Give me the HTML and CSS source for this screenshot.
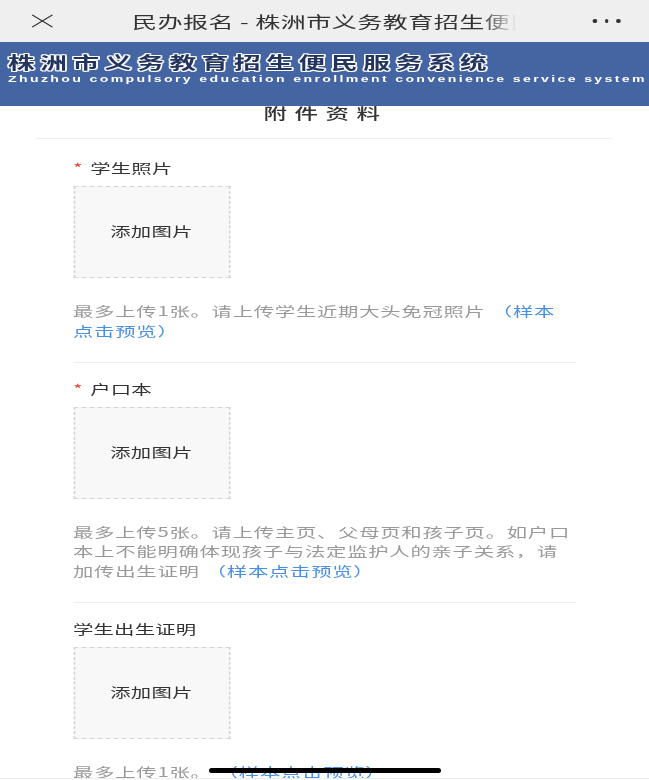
FILE: index.html
```html
<!DOCTYPE html>
<html lang="zh-CN">
<head>
<meta charset="utf-8">
<title>民办报名</title>
<link rel="stylesheet" href="styles.css">
</head>
<body>
<div class="page">
  <header class="topbar">
    <svg class="close" viewBox="0 0 14 14" width="14" height="14"><path d="M0.5 0.8 L13.5 13.2 M13.5 0.8 L0.5 13.2" stroke="#333" stroke-width="0.9" fill="none"/></svg>
    <div class="pagetitle">民办报名 - 株洲市义务教育招生便民服务系统</div>
    <div class="dots"><i></i><i></i><i></i></div>
  </header>
  <div class="banner">
    <div class="banner-cn">株洲市义务教育招生便民服务系统</div>
    <div class="banner-en">Zhuzhou compulsory education enrollment convenience service system</div>
  </div>
  <h1 class="heading">附件资料</h1>
  <main class="form">
    <section class="item">
      <div class="label"><span class="req">*</span>学生照片</div>
      <div class="upload">添加图片</div>
      <p class="hint">最多上传1张。请上传学生近期大头免冠照片 <a class="link">（样本点击预览）</a></p>
    </section>
    <section class="item">
      <div class="label"><span class="req">*</span>户口本</div>
      <div class="upload">添加图片</div>
      <p class="hint">最多上传5张。请上传主页、父母页和孩子页。如户口本上不能明确体现孩子与法定监护人的亲子关系，请加传出生证明 <a class="link">（样本点击预览）</a></p>
    </section>
    <section class="item">
      <div class="label">学生出生证明</div>
      <div class="upload">添加图片</div>
      <p class="hint">最多上传1张。 <a class="link">（样本点击预览）</a></p>
    </section>
  </main>
</div>
<div class="homebar"></div>
<div class="bottomline"></div>
</body>
</html>
```
FILE: styles.css
```css
html, body {
  margin: 0;
  height: 780px;
  overflow: hidden;
  background: #fff;
}
body {
  position: relative;
  font-family: "Noto Sans CJK SC", "Liberation Sans", sans-serif;
}
.page {
  width: 414px;
  height: 780px;
  overflow: hidden;
  transform: scaleX(1.5676);
  transform-origin: 0 0;
  filter: blur(0.35px);
}
.topbar {
  height: 42px;
  background: #efefef;
  display: flex;
  align-items: center;
  padding-left: 19.8px;
  box-sizing: border-box;
}
.close { flex: none; }
.pagetitle {
  flex: none;
  width: 247.5px;
  margin-left: 50.4px;
  font-size: 16px;
  letter-spacing: 0.27px;
  line-height: 24px;
  color: #333;
  white-space: nowrap;
  overflow: hidden;
  -webkit-mask-image: linear-gradient(to right, #000 90%, transparent 99%);
  mask-image: linear-gradient(to right, #000 90%, transparent 99%);
}
.dots {
  display: flex;
  gap: 5px;
  margin-left: 46.6px;
}
.dots i {
  width: 2.6px;
  height: 4px;
  border-radius: 50%;
  background: #333;
}
.banner {
  position: relative;
  z-index: 1;
  height: 64px;
  box-sizing: border-box;
  padding: 7px 0 0 5.1px;
  background-color: #4566a5;
  background-image: repeating-linear-gradient(0deg, rgba(0, 0, 0, 0.025) 0 1px, transparent 1px 2px);
  overflow: hidden;
  white-space: nowrap;
}
.banner-cn {
  font-size: 17px;
  font-weight: 700;
  line-height: 25px;
  letter-spacing: 3.6px;
  color: #23355f;
  text-shadow: 1px 0 0 #fff, -1px 0 0 #fff, 0 1px 0 #fff, 0 -1px 0 #fff, 1px 1px 0 #dfe6f4, -1px -1px 0 #dfe6f4, 1px -1px 0 #dfe6f4, -1px 1px 0 #dfe6f4;
}
.banner-en {
  font-family: "Liberation Sans", sans-serif;
  font-size: 9px;
  font-weight: 700;
  line-height: 10px;
  letter-spacing: 1.5px;
  color: #fff;
}
.heading {
  margin: -5px 0 0 23px;
  height: 37px;
  width: 367.4px;
  box-sizing: content-box;
  border-bottom: 1px solid #eee;
  text-align: center;
  text-indent: 2px;
  font-size: 15px;
  font-weight: 500;
  line-height: 24px;
  letter-spacing: 4.8px;
  color: #333;
}
.form { padding: 0 46.6px; }
.item {
  padding: 19px 0 21.5px;
  border-bottom: 1px solid #eee;
}
.item + .item { padding-top: 16px; }
.label {
  display: flex;
  font-size: 13px;
  line-height: 20px;
  letter-spacing: 0.1px;
  color: #333;
  margin-bottom: 8px;
}
.req {
  color: #e8453c;
  width: 11px;
  letter-spacing: 0;
}
.upload {
  width: 100.2px;
  height: 92px;
  box-sizing: border-box;
  padding-bottom: 3px;
  display: flex;
  align-items: center;
  justify-content: center;
  background: #f8f8f8;
  border: 1px dashed #d4d4d4;
  font-size: 13px;
  letter-spacing: 0.2px;
  color: #333;
}
.hint {
  margin: 23px 0 0;
  font-size: 13px;
  line-height: 19.5px;
  letter-spacing: 0.45px;
  color: #999;
}
.link {
  margin-left: 0.6px;
  color: #4a90e2;
}
.homebar {
  position: absolute;
  left: 209px;
  top: 768px;
  width: 232px;
  height: 5px;
  border-radius: 3px;
  background: #000;
}
.bottomline {
  position: absolute;
  left: 0;
  right: 0;
  top: 778px;
  height: 1px;
  background: #eee;
}
```
